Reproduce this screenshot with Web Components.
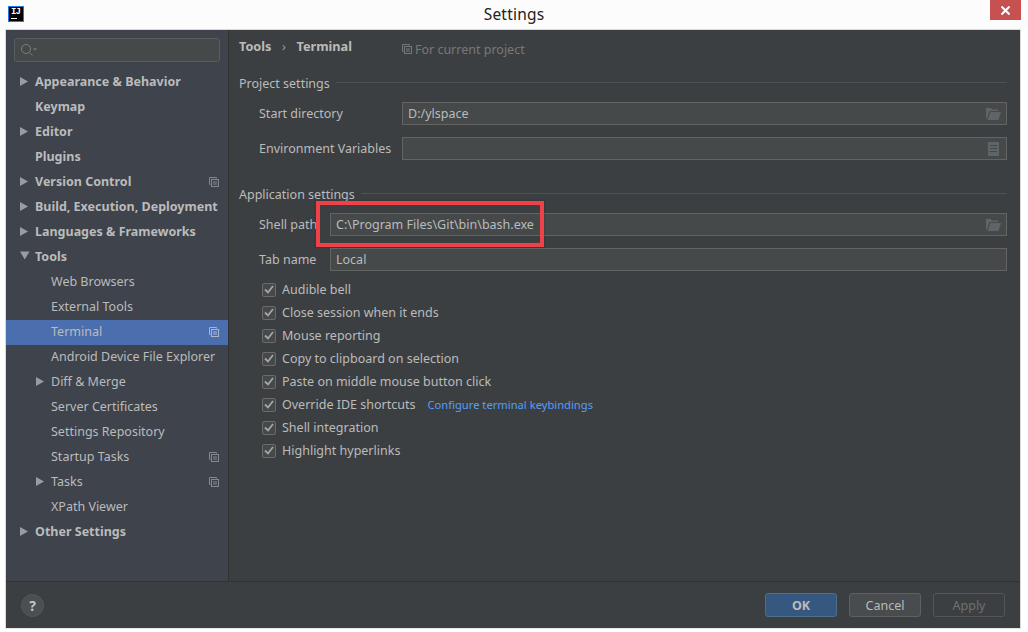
<!DOCTYPE html>
<html>
<head>
<meta charset="utf-8">
<title>Settings</title>
<style>
    html, body { margin: 0; padding: 0; background: #fff; font-family: "Noto Sans", "Open Sans", sans-serif; font-size: 12.5px; color: #bbbbbb; }
</style>
</head>
<body>
<settings-window>
    <settings-sidebar slot="sidebar">
        <tree-item bold arrow="right">Appearance &amp; Behavior</tree-item>
        <tree-item bold>Keymap</tree-item>
        <tree-item bold arrow="right">Editor</tree-item>
        <tree-item bold>Plugins</tree-item>
        <tree-item bold arrow="right" copy>Version Control</tree-item>
        <tree-item bold arrow="right">Build, Execution, Deployment</tree-item>
        <tree-item bold arrow="right">Languages &amp; Frameworks</tree-item>
        <tree-item bold arrow="down">Tools</tree-item>
        <tree-item level="1">Web Browsers</tree-item>
        <tree-item level="1">External Tools</tree-item>
        <tree-item level="1" selected copy>Terminal</tree-item>
        <tree-item level="1">Android Device File Explorer</tree-item>
        <tree-item level="1" arrow="right">Diff &amp; Merge</tree-item>
        <tree-item level="1">Server Certificates</tree-item>
        <tree-item level="1">Settings Repository</tree-item>
        <tree-item level="1" copy>Startup Tasks</tree-item>
        <tree-item level="1" arrow="right" copy>Tasks</tree-item>
        <tree-item level="1">XPath Viewer</tree-item>
        <tree-item bold arrow="right">Other Settings</tree-item>
    </settings-sidebar>

    <terminal-panel slot="main"></terminal-panel>

    <help-button slot="help"></help-button>
    <ide-button slot="buttons" primary>OK</ide-button>
    <ide-button slot="buttons">Cancel</ide-button>
    <ide-button slot="buttons" disabled>Apply</ide-button>
</settings-window>

<script>
const copyIcon = `<svg width="10" height="10" viewBox="0 0 10 10" fill="none" stroke="currentColor" stroke-width="1"><path d="M1.500 7.500h-1v-7h7v1"/><rect x="2.500" y="2.500" width="7" height="7"/><path d="M4 5h4M4 7h4"/></svg>`;

const folderIcon = `<svg width="15" height="12" viewBox="0 0 15 12"><path fill="#5e6467" d="M0 0h5l1 1.500h6v1.500H3.500L1 10.500H0z"/><path fill="#5e6467" d="M4.500 4H15L12.500 12H1.500z"/></svg>`;

class SettingsWindow extends HTMLElement {
    constructor() {
        super();
        this.attachShadow({ mode: "open" });
        this.shadowRoot.innerHTML = `
        <style>
            :host { display: block; width: 1028px; height: 632px; overflow: hidden; position: relative; }
            .title {
                height: 29px; display: flex; align-items: flex-start; justify-content: center;
                position: relative; background: #fcfcfc;
            }
            .title span { font-size: 15.500px; line-height: 28px; color: #222; letter-spacing: .2px; }
            .logo {
                position: absolute; left: 8px; top: 6px; width: 12px; height: 14px; background: #000;
                border: 1px solid #1c7ce0; color: #fff; font: bold 9px/10px "Liberation Mono", monospace;
                padding-left: 2px; letter-spacing: -1px;
            }
            .logo i { position: absolute; left: 2px; bottom: 2px; width: 6px; height: 1px; background: #fff; }
            .close {
                position: absolute; right: 7px; top: 0; width: 31px; height: 20px; background: #c75050;
                display: flex; align-items: center; justify-content: center;
            }
            .dialog {
                margin: 0 7px 3px 5px; height: 598px; border: 1px solid #d9d9d9; border-bottom-color: #e8e8e8;
                display: flex; flex-direction: column; background: #3c3f41;
            }
            .body { flex: 1; display: flex; min-height: 0; }
            .left { width: 222px; flex: none; background: #3e434c; border-right: 1px solid #323232; }
            .right { flex: 1; min-width: 0; }
            .footer {
                height: 46px; flex: none; border-top: 1px solid #323232; display: flex;
                align-items: center; justify-content: space-between; padding: 0 15px 0 15px;
            }
            .buttons { display: flex; gap: 12px; }
        </style>
        <div class="title">
            <div class="logo">IJ<i></i></div>
            <span>Settings</span>
            <div class="close">
                <svg width="9" height="9" viewBox="0 0 9 9" stroke="#fff" stroke-width="2"><path d="M.5.500l8 8M8.500.500l-8 8"/></svg>
            </div>
        </div>
        <div class="dialog">
            <div class="body">
                <div class="left"><slot name="sidebar"></slot></div>
                <div class="right"><slot name="main"></slot></div>
            </div>
            <div class="footer">
                <slot name="help"></slot>
                <div class="buttons"><slot name="buttons"></slot></div>
            </div>
        </div>`;
    }
}

class SettingsSidebar extends HTMLElement {
    constructor() {
        super();
        this.attachShadow({ mode: "open" });
        this.shadowRoot.innerHTML = `
        <style>
            :host { display: block; padding-top: 8px; }
            .search {
                margin: 0 8px 8px 8px; height: 24px; box-sizing: border-box; background: #45494a;
                border: 1px solid #5a5d5e; border-radius: 3px; display: flex; align-items: center; padding-left: 5px;
            }
        </style>
        <div class="search">
            <svg width="18" height="14" viewBox="0 0 18 14" fill="none" stroke="#7d8083">
                <circle cx="6" cy="6" r="4.500"/><path d="M9.500 9.500l3 3"/><path d="M13 5.500h4l-2 2z" fill="#7d8083" stroke="none"/>
            </svg>
        </div>
        <slot></slot>`;
    }
}

class TreeItem extends HTMLElement {
    constructor() {
        super();
        this.attachShadow({ mode: "open" });
    }
    connectedCallback() {
        const level = Number(this.getAttribute("level") || 0);
        const arrow = this.getAttribute("arrow");
        const arrowSvg = arrow === "right"
            ? `<svg width="9" height="11" viewBox="0 0 9 11"><path d="M0 1l8 4.500-8 4.500z" fill="#9a9da0"/></svg>`
            : arrow === "down"
            ? `<svg width="10" height="9" viewBox="0 0 10 9"><path d="M0 .500h9.500l-4.750 8z" fill="#9a9da0"/></svg>`
            : "";
        this.shadowRoot.innerHTML = `
        <style>
            :host { display: block; }
            .row {
                height: 25px; box-sizing: border-box; padding-bottom: 3px; display: flex; align-items: center; position: relative;
                padding-left: ${level ? 45 : 29}px; color: #bbbbbb; white-space: nowrap;
            }
            :host([bold]) .row { font-weight: 700; }
            :host([selected]) .row { background: #4b6eaf; }
            .arrow { position: absolute; left: ${level ? 30 : 14}px; top: 6px; display: flex; }
            .copy { position: absolute; left: 203px; top: 7px; color: #85888c; display: flex; }
            :host([selected]) .copy { color: #a9b5cb; }
        </style>
        <div class="row">
            ${arrow ? `<span class="arrow">${arrowSvg}</span>` : ""}
            <slot></slot>
            ${this.hasAttribute("copy") ? `<span class="copy">${copyIcon}</span>` : ""}
        </div>`;
    }
}

class SectionTitle extends HTMLElement {
    constructor() {
        super();
        this.attachShadow({ mode: "open" });
        this.shadowRoot.innerHTML = `
        <style>
            :host { display: flex; align-items: center; gap: 6px; height: 18px; color: #bbbbbb; white-space: nowrap; }
            i { flex: 1; height: 1px; background: #515151; margin-top: -2px; }
        </style>
        <slot></slot><i></i>`;
    }
}

class FormField extends HTMLElement {
    constructor() {
        super();
        this.attachShadow({ mode: "open" });
    }
    connectedCallback() {
        const width = this.getAttribute("label-width") || "143";
        const icon = this.getAttribute("icon");
        const iconSvg = icon === "folder" ? folderIcon
            : icon === "doc" ? `<svg style="margin-right:2px" width="11" height="14" viewBox="0 0 11 14"><path fill="#5e6467" fill-rule="evenodd" d="M0 0h11v14H0zM2 3v1h7V3zM2 6v1h7V6zM2 9v1h7V9z"/></svg>`
            : "";
        this.shadowRoot.innerHTML = `
        <style>
            :host { display: flex; align-items: center; height: 23px; padding-left: 20px; }
            label { width: ${width}px; flex: none; color: #bbbbbb; white-space: nowrap; }
            .input {
                flex: 1; height: 23px; box-sizing: border-box; background: #45494a; border: 1px solid #646464;
                display: flex; align-items: center; justify-content: space-between; padding: 0 5px 0 5px; color: #bbbbbb;
            }
            .icon { display: flex; }
        </style>
        <label>${this.getAttribute("label")}</label>
        <div class="input"><span><slot></slot></span><span class="icon">${iconSvg}</span></div>`;
    }
}

class CheckRow extends HTMLElement {
    constructor() {
        super();
        this.attachShadow({ mode: "open" });
        this.shadowRoot.innerHTML = `
        <style>
            :host { display: flex; align-items: center; height: 23px; padding-left: 23px; gap: 6px; white-space: nowrap; color: #bbbbbb; }
            .box {
                width: 14px; height: 14px; box-sizing: border-box; background: #45494a; border: 1px solid #6b6b6b;
                border-radius: 2px; display: flex; align-items: center; justify-content: center; flex: none;
            }
            .label { margin-top: -1px; display: flex; gap: 12px; align-items: center; }
        </style>
        <div class="box"><svg width="10" height="9" viewBox="0 0 10 9" fill="none" stroke="#a7a7a7" stroke-width="1.800"><path d="M1 4.500l3 3 5-6.500"/></svg></div>
        <div class="label"><slot></slot></div>`;
    }
}

class HelpButton extends HTMLElement {
    constructor() {
        super();
        this.attachShadow({ mode: "open" });
        this.shadowRoot.innerHTML = `
        <style>
            :host {
                display: flex; width: 23px; height: 23px; box-sizing: border-box; border-radius: 50%; background: #4b4f51;
                border: 1px solid #54585a; align-items: center; justify-content: center; color: #c4c4c4;
                font-weight: 700; font-size: 14px;
            }
        </style>?`;
    }
}

class IdeButton extends HTMLElement {
    constructor() {
        super();
        this.attachShadow({ mode: "open" });
        this.shadowRoot.innerHTML = `
        <style>
            :host {
                display: flex; width: 72px; height: 24px; box-sizing: border-box; align-items: center; justify-content: center;
                border: 1px solid #5e6060; border-radius: 3px; background: #494c4e; color: #bbbbbb;
            }
            :host([primary]) { background: #365880; border-color: #4c708c; color: #bbbbbb; font-weight: 700; }
            :host([disabled]) { background: #3c3f41; border-color: #535556; color: #6f7172; }
        </style>
        <slot></slot>`;
    }
}

class TerminalPanel extends HTMLElement {
    constructor() {
        super();
        this.attachShadow({ mode: "open" });
        this.shadowRoot.innerHTML = `
        <style>
            :host { display: block; padding: 7px 13px 0 10px; position: relative; height: 100%; box-sizing: border-box; }
            .crumbs { display: flex; align-items: center; height: 18px; white-space: nowrap; font-weight: 700; font-size: 12.700px; margin-bottom: 19px; }
            .sep { width: 25px; text-align: center; font-weight: 400; color: #9a9a9a; }
            .scope { display: flex; align-items: center; gap: 3px; margin: 6px 0 0 50px; font-weight: 400; font-size: 12.500px; color: #787878; }
            .scope span { display: flex; }
            form-field { margin-bottom: 12px; }
            .gap { height: 13px; }
            .first { margin-top: 10px; }
            .last { margin-bottom: 7px; }
            a { color: #589df6; text-decoration: none; font-size: 11.200px; }
            .mark {
                position: absolute; left: 87px; top: 171px; width: 228px; height: 46px; box-sizing: border-box;
                border: 4px solid #f04149; box-shadow: 0 0 2px rgba(0,0,0,.3); pointer-events: none;
            }
        </style>
        <div class="crumbs">
            Tools<span class="sep">›</span>Terminal
            <div class="scope"><span>${copyIcon}</span>For current project</div>
        </div>
        <section-title>Project settings</section-title>
        <form-field class="first" label="Start directory" icon="folder">D:/ylspace</form-field>
        <form-field label="Environment Variables" icon="doc"></form-field>
        <div class="gap"></div>
        <section-title>Application settings</section-title>
        <form-field class="first" label="Shell path" label-width="71" icon="folder">C:\\Program Files\\Git\\bin\\bash.exe</form-field>
        <form-field class="last" label="Tab name" label-width="71">Local</form-field>
        <check-row>Audible bell</check-row>
        <check-row>Close session when it ends</check-row>
        <check-row>Mouse reporting</check-row>
        <check-row>Copy to clipboard on selection</check-row>
        <check-row>Paste on middle mouse button click</check-row>
        <check-row>Override IDE shortcuts<a>Configure terminal keybindings</a></check-row>
        <check-row>Shell integration</check-row>
        <check-row>Highlight hyperlinks</check-row>
        <div class="mark"></div>`;
    }
}

customElements.define("settings-window", SettingsWindow);
customElements.define("settings-sidebar", SettingsSidebar);
customElements.define("tree-item", TreeItem);
customElements.define("section-title", SectionTitle);
customElements.define("form-field", FormField);
customElements.define("check-row", CheckRow);
customElements.define("help-button", HelpButton);
customElements.define("ide-button", IdeButton);
customElements.define("terminal-panel", TerminalPanel);
</script>
</body>
</html>
